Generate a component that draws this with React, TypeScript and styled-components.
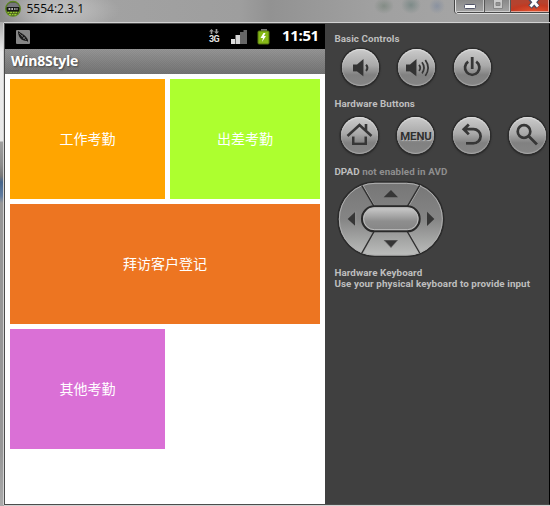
import React from 'react';
import styled, { createGlobalStyle } from 'styled-components';

const GlobalStyle = createGlobalStyle`
  * { box-sizing: border-box; }
  body { margin: 0; overflow: hidden; }
  svg { display: block; }
`;

const Window = styled.div`
  width: 550px;
  height: 506px;
  display: grid;
  grid-template-rows: 22px 484px;
  overflow: hidden;
  background: #a0a0a0;
`;

const Caption = styled.header`
  display: flex;
  align-items: flex-start;
  padding-left: 5px;
  border-right: 1px solid #000;
  background:
    radial-gradient(ellipse 60px 20px at 60px 10px, rgba(200, 200, 200, 0.75), transparent),
    radial-gradient(ellipse 10px 8px at 384px 6px, rgba(95, 115, 100, 0.45), transparent),
    radial-gradient(ellipse 10px 9px at 411px 5px, rgba(80, 110, 105, 0.45), transparent),
    radial-gradient(ellipse 8px 8px at 437px 6px, rgba(100, 120, 155, 0.4), transparent),
    linear-gradient(90deg, #8b8b8b 0, #b0b0b0 50px, #a2a2a2 110px, #9e9e9e 240px, #929292 270px, #a0a0a0 370px, #a4a4a4 450px, #979797 549px);
`;

const CaptionText = styled.span`
  margin-left: 5.5px;
  flex: 1;
  font: 12px/17px 'Open Sans', 'Noto Sans', sans-serif;
  color: #0a0a0a;
`;

const CaptionButtons = styled.div`
  display: flex;
  width: 94px;
  height: 14px;
  border: 1px solid #e0e0e0;
  border-width: 0 0 1px 1px;
  border-radius: 0 0 0 4px;
  overflow: hidden;
  box-shadow: -1px 0 0 #454545, inset 0 -1px 0 #454545;
`;

const CaptionButton = styled.div<{ $width: number; $close?: boolean }>`
  width: ${p => p.$width}px;
  display: flex;
  justify-content: center;
  padding-left: ${p => (p.$close ? 9 : 0)}px;
  border-right: ${p => (p.$close ? 'none' : '1px solid #565656')};
  border-bottom: 1px solid #484848;
  box-shadow: inset -1px -1px 0 rgba(240, 240, 240, 0.55);
  background: ${p =>
    p.$close
      ? 'radial-gradient(ellipse 32px 10px at 60% 100%, #e6532f, #c23a22 70%, #b5432f)'
      : 'linear-gradient(#898989, #a5a5a5)'};
`;

const Frame = styled.main`
  display: flex;
  padding-left: 4px;
  background: linear-gradient(#aaa 0, #ededed 30px, #e8e8e8 119px, #9f9f9f 120px, #8c8c8c 143px, #777 154px, #46658b 160px, #5f7ba0 174px, #979797 181px, #979797 430px, #aaa 484px);
`;

const Client = styled.div`
  width: 546px;
  display: grid;
  grid-template-columns: 320px 1fr;
  border: 1px solid #4c4c4c;
  border-right-color: #000;
  margin: 1px 0;
  box-shadow: 0 -1px 0 #d2d2d2, -1px 0 0 #d2d2d2, 0 1px 0 #d2d2d2;
  background: #404040;
`;

const Phone = styled.section`
  display: grid;
  grid-template-rows: 25px 25px 430px;
  background: #fff;
`;

const StatusBar = styled.div`
  display: flex;
  align-items: center;
  background: #000;
  padding-left: 11px;
  color: #fff;
`;

const Clock = styled.span`
  width: 43px;
  margin-left: 10px;
  font: bold 15px/23px 'Open Sans', 'Noto Sans', sans-serif;
  letter-spacing: -0.35px;
  white-space: nowrap;
  padding-bottom: 2px;
`;

const StatusIcons = styled.div`
  display: flex;
  margin-left: auto;
`;

const NetworkType = styled.div`
  width: 12px;
  height: 25px;
  padding-top: 5px;
  display: flex;
  flex-direction: column;
  align-items: center;
  font: bold 9px/10px Roboto, sans-serif;
  letter-spacing: -0.6px;
  color: #e2e2e2;
`;

const AppTitle = styled.h1`
  margin: 0;
  padding-left: 6px;
  font: bold 14px/24px 'Open Sans', 'Noto Sans', sans-serif;
  letter-spacing: -0.25px;
  color: #fff;
  text-shadow: 1px 1px 2px #444;
  background:
    repeating-conic-gradient(rgba(0, 0, 0, 0.05) 0 25%, transparent 0 50%) 0 0 / 2px 2px,
    linear-gradient(#969696, #747474);
`;

const Tiles = styled.div`
  display: grid;
  grid-template-columns: 155px 150px;
  grid-auto-rows: 120px;
  gap: 5px;
  padding: 5px;
`;

const Tile = styled.div<{ $color: string; $wide?: boolean }>`
  grid-column: ${p => (p.$wide ? '1 / -1' : 'auto')};
  display: flex;
  align-items: center;
  justify-content: center;
  padding-bottom: 2px;
  background: ${p => p.$color};
  color: #fff;
  font: 14px/20px 'Noto Sans CJK SC', sans-serif;
`;

const Controls = styled.aside`
  display: grid;
  grid-template-rows: 65px 68px 101px 1fr;
  padding-left: 9px;
  overflow: hidden;
`;

const Group = styled.section`
  padding-top: 8px;
`;

const Label = styled.div`
  height: 11px;
  padding-left: 0.4px;
  font: bold 9.8px/13px Roboto, sans-serif;
  letter-spacing: 0.09px;
  color: #bebebe;
  white-space: nowrap;
`;

const Muted = styled.span`
  color: #8e8e8e;
`;

const ButtonRow = styled.div<{ $top: number; $left: number }>`
  display: flex;
  gap: 19px;
  padding: ${p => p.$top}px 0 0 ${p => p.$left}px;
`;

const RoundButton = styled.div`
  flex: none;
  width: 37px;
  height: 37px;
  display: flex;
  align-items: center;
  justify-content: center;
  border-radius: 50%;
  background: linear-gradient(#cbcbcb, #a9a9a9 45%, #818181 70%, #858585);
  box-shadow: 0 0 0 1.5px #2c2c2c, 0 1px 2px 1px #2d2d2d, inset 0 1px 1px #dedede, inset 0 -1px 1px #a8a8a8;
  font: bold 11.4px/37px Roboto, sans-serif;
  letter-spacing: -0.1px;
  color: #303030;
  text-shadow: 1px 1px 0 #b3b3b3;
`;

const MenuText = styled.span`
  padding: 2px 0 0 1px;
`;

const Glyph = styled.svg`
  filter: drop-shadow(0.7px 0.8px 0 #b5b5b5);
`;

const Dpad = styled.svg`
  margin: 5px 0 0 3px;
`;

type GlyphName = 'down' | 'up' | 'power' | 'home' | 'back' | 'search';

const glyphs: Record<GlyphName, React.ReactNode> = {
  down: (
    <>
      <path d="M11 15.5h4l6.5-5.5v17.5L15 22.5h-4z" fill="#333" stroke="none" />
      <path d="M24 15.8q2.8 3 0 6.2" strokeWidth="2.1" />
    </>
  ),
  up: (
    <>
      <path d="M8 15.5h4l6.5-5.5v17.5L12 22.5H8z" fill="#333" stroke="none" />
      <path d="M21 15.8q2.5 3 0 6.2M24 13.3q4 5.4 0 11.2M27.3 11q5.6 7.7 0 16" strokeWidth="1.8" />
    </>
  ),
  power: <path d="M14.2 12.7a7.2 7.2 0 1 0 8 0M18.2 8v12" strokeWidth="2.8" />,
  home: <path d="M6.5 19 18.5 8l12 11M25 7v7M12.3 19.5v7.3h12.4v-7.3" strokeWidth="2.6" />,
  back: <path d="m15.8 7.5-5 4.7 5 5.2M11 12.2h9.5a7 7 0 0 1 0 14.2H13" strokeWidth="2.8" />,
  search: (
    <>
      <circle cx="15" cy="14.5" r="6.3" strokeWidth="2.7" />
      <path d="m19.5 19 8.5 8.5" strokeWidth="3" />
    </>
  ),
};

function ControlButton({ name }: { name: GlyphName }) {
  return (
    <RoundButton>
      <Glyph width="37" height="37" viewBox="0 0 37 37" fill="none" stroke="#363636">
        {glyphs[name]}
      </Glyph>
    </RoundButton>
  );
}

function EmulatorIcon() {
  return (
    <svg width="16" height="17" viewBox="0 0 16 17">
      <circle cx="8" cy="8.8" r="7.3" fill="#263018" stroke="#5d8620" strokeWidth="1.3" />
      <path d="M1.5 7a7 7 0 0 1 13 0Z" fill="#76777b" />
      <path d="M2 7h12v4H2z" fill="#151715" />
      <path d="M3.5 9h1.8m1 0H8m1.2 0h1.3m1 0h1" stroke="#eee" strokeWidth="1.4" />
      <path d="M2.5 12.5h11M4 14.5h8" stroke="#9cce31" strokeWidth="1.3" strokeDasharray="2 .6" />
    </svg>
  );
}

function NetworkIcons() {
  return (
    <>
      <NetworkType>
        <svg width="12" height="5" viewBox="0 0 12 5">
          <path d="M1 2.5 3.5 0 6 2.5H4.3V5H2.7V2.5zM6 2.5h1.7V0h1.6v2.5H11L8.5 5z" fill="#999" />
        </svg>
        3G
      </NetworkType>
      <svg width="52" height="25" viewBox="12 0 52 25">
        <path d="M23 15h4v5h-4z" fill="#ddd" />
        <path d="M27.5 11H32v9h-4.5z" fill="#d5d5d5" />
        <path d="M32 8h3.5v12H32zM35.5 6H39v14h-3.5z" fill="#666" />
        <path d="M53 5h6v3h-6z" fill="#777" />
        <rect x="50" y="7" width="11" height="13" rx="1" fill="#86b817" stroke="#577710" />
        <path d="m55.5 9-3 5h2.5l-1 4 4-6h-2l1.5-3z" fill="#fff" />
      </svg>
    </>
  );
}

function DirectionalPad() {
  return (
    <Dpad width="108" height="76" viewBox="36 63 324 228">
      <defs>
        <linearGradient id="pad" x2="0" y2="1">
          <stop stopColor="#767676" />
          <stop offset=".5" stopColor="#858585" />
          <stop offset="1" stopColor="#bdbfbd" />
        </linearGradient>
        <linearGradient id="center" x2="0" y2="1">
          <stop stopColor="#d0d0d0" />
          <stop offset=".6" stopColor="#8e8e8e" />
          <stop offset="1" stopColor="#858585" />
        </linearGradient>
      </defs>
      <rect x="39" y="66" width="317" height="223" rx="111" fill="url(#pad)" stroke="#2b2b2b" strokeWidth="5" />
      <rect x="43" y="70" width="309" height="215" rx="107" fill="none" stroke="#b0b0b0" strokeWidth="3" />
      <path d="m114 76 35 63m139-64-37 64M114 280l35-65m139 64-37-64" stroke="#aaa" strokeWidth="3" />
      <path d="m110 76 37 63m137-63-37 63M110 280l37-65m137 64-37-64" stroke="#303030" strokeWidth="4" />
      <rect x="111" y="139" width="173" height="75" rx="37" fill="url(#center)" stroke="#292929" strokeWidth="6" />
      <rect x="116" y="144" width="163" height="65" rx="32" fill="none" stroke="#bcbcbc" strokeWidth="3" />
      <path d="M176 112h43l-21-22zM176 241h43l-21 23zM91 155v43l-23-21zM306 155v43l22-21z" fill="#363636" />
      <path d="m178 242 20 21 20-21M92 155v43" fill="none" stroke="#bbb" strokeWidth="1.5" />
    </Dpad>
  );
}

export default function App() {
  return (
    <Window>
      <GlobalStyle />
      <Caption>
        <EmulatorIcon />
        <CaptionText>5554:2.3.1</CaptionText>
        <CaptionButtons>
          <CaptionButton $width={29}>
            <svg width="14" height="12"><rect x="1.5" y="4.5" width="11" height="4" rx="1" fill="#fff" stroke="#525569" /></svg>
          </CaptionButton>
          <CaptionButton $width={26}>
            <svg width="12" height="12"><path d="M1.5 0v8.5h9V0M4 2.5h4v3H4z" fill="#c9c9c9" stroke="#858585" /></svg>
          </CaptionButton>
          <CaptionButton $width={38} $close>
            <svg width="14" height="12" viewBox="0 0 14 12">
              <path d="m2-2 8 9m0-9L2 7" stroke="#484d64" strokeWidth="5" />
              <path d="m2.5-2 7.5 8.5m0-8.5L2.5 6.5" stroke="#fff" strokeWidth="2.8" />
            </svg>
          </CaptionButton>
        </CaptionButtons>
      </Caption>
      <Frame>
        <Client>
          <Phone>
            <StatusBar>
              <svg width="14" height="25" viewBox="0 0 14 25">
                <rect y="6" width="14" height="14" rx="1" fill="#858585" />
                <path d="M2 7c0 6 3 10 9 10l1 1v-2C10 11 6 10 2 7Z" fill="#181818" />
                <path d="m3 9 7 7M5 12l2-1m0 4 2-2" stroke="#777" strokeWidth=".7" />
              </svg>
              <StatusIcons><NetworkIcons /></StatusIcons>
              <Clock>11:51</Clock>
            </StatusBar>
            <AppTitle>Win8Style</AppTitle>
            <Tiles>
              <Tile $color="#ffa500">工作考勤</Tile>
              <Tile $color="#adff2f">出差考勤</Tile>
              <Tile $color="#ed7521" $wide>拜访客户登记</Tile>
              <Tile $color="#da70d6">其他考勤</Tile>
            </Tiles>
          </Phone>
          <Controls>
            <Group>
              <Label>Basic Controls</Label>
              <ButtonRow $top={6} $left={8}>
                <ControlButton name="down" />
                <ControlButton name="up" />
                <ControlButton name="power" />
              </ButtonRow>
            </Group>
            <Group>
              <Label>Hardware Buttons</Label>
              <ButtonRow $top={9} $left={7}>
                <ControlButton name="home" />
                <RoundButton><MenuText>MENU</MenuText></RoundButton>
                <ControlButton name="back" />
                <ControlButton name="search" />
              </ButtonRow>
            </Group>
            <Group>
              <Label>DPAD <Muted>not enabled in AVD</Muted></Label>
              <DirectionalPad />
            </Group>
            <Group>
              <Label>Hardware Keyboard</Label>
              <Label>Use your physical keyboard to provide input</Label>
            </Group>
          </Controls>
        </Client>
      </Frame>
    </Window>
  );
}
